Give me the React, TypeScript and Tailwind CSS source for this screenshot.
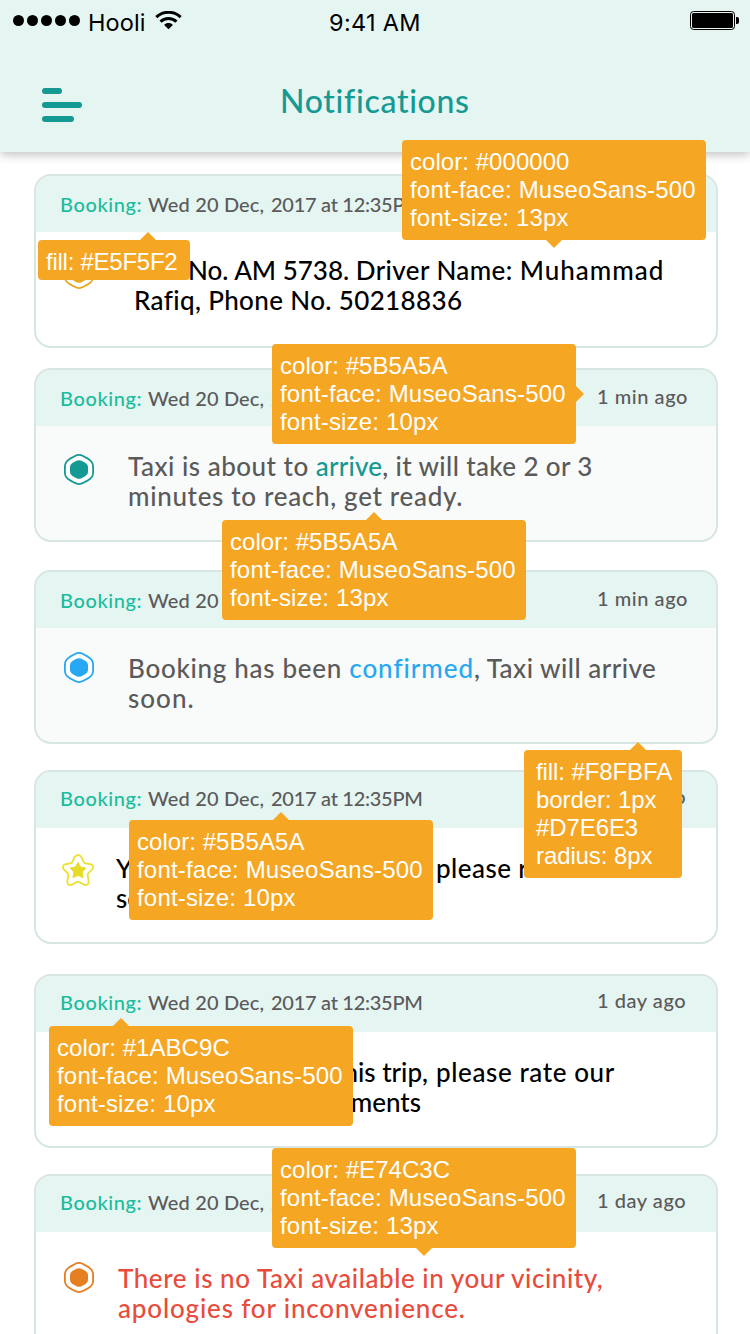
import type { ReactNode } from "react";

function Seg({ ls, className = "", children }: { ls: string; className?: string; children: ReactNode }) {
  return <span className={`${ls} ${className}`}>{children}</span>;
}

function WifiIcon() {
  return (
    <svg className="h-[19px] w-[27px]" viewBox="0 0 27 19" fill="none" stroke="#000">
      <path d="M1.300 6.200C8 -0.300 19 -0.300 25.700 6.200" strokeWidth="3" />
      <path d="M5.500 10.600C9.900 6.400 17.100 6.400 21.500 10.600" strokeWidth="2.900" />
      <path d="M13.500 18.200L9.100 13.900C11.500 11.300 15.500 11.300 17.900 13.900Z" fill="#000" stroke="none" />
    </svg>
  );
}

function Battery() {
  return (
    <div className="flex items-center gap-px">
      <div className="h-[19px] w-[45px] rounded-[3.5px] border border-black p-px">
        <div className="h-full w-full rounded-[1.5px] bg-black" />
      </div>
      <div className="h-[7px] w-[3px] rounded-r-[2px] bg-black" />
    </div>
  );
}

function HexIcon({ color }: { color: string }) {
  return (
    <svg className="h-[31px] w-[30px]" viewBox="0 0 30 31">
      <path
        d="M10.600 2.200Q15 -0.300 19.400 2.200L24.300 4.900Q29.100 7.800 29.100 12.600V18.400Q29.100 23.200 24.300 26.100L19.400 28.800Q15 31.300 10.600 28.800L5.700 26.100Q0.900 23.200 0.900 18.400V12.600Q0.900 7.800 5.700 4.900Z"
        fill="#fff"
        stroke={color}
        strokeWidth="1.800"
      />
      <path
        d="M12.500 6.800Q15 5.500 17.500 6.800L21.600 9.100Q24 10.500 24 13V18Q24 20.500 21.600 21.900L17.500 24.200Q15 25.500 12.500 24.200L8.400 21.900Q6 20.500 6 18V13Q6 10.500 8.400 9.100Z"
        fill={color}
      />
    </svg>
  );
}

function StarIcon() {
  return (
    <svg className="h-[32px] w-[32px]" viewBox="0 0 32 32">
      <path
        d="M12.800 2.800Q16 -1 19.200 2.800L21.800 8.200Q22.400 9.200 23.600 9.400L28.600 10.200Q33 12 30 15.600L26.200 19.400Q25.500 20.200 25.700 21.400L26.700 27.200Q26.500 31.800 22.400 30.800L17.400 28.200Q16 27.500 14.600 28.200L9.600 30.800Q5.500 31.800 5.300 27.200L6.300 21.400Q6.500 20.200 5.800 19.400L2 15.600Q-1 12 3.400 10.200L8.400 9.400Q9.600 9.200 10.200 8.200Z"
        fill="#fff"
        stroke="#EAE238"
        strokeWidth="1.900"
        strokeLinejoin="round"
      />
      <path
        d="M16 8.200L18.600 13L24 14L20.300 18L21.100 23.800L16 21.500L10.900 23.800L11.700 18L8 14L13.400 13Z"
        fill="#E6DC28"
        stroke="#E6DC28"
        strokeWidth="0.800"
        strokeLinejoin="round"
      />
    </svg>
  );
}

type CardProps = {
  icon: ReactNode;
  iconPad: string;
  time: string;
  headPad?: string;
  tone?: string;
  indent: string;
  top: string;
  children: ReactNode;
};

function Card({
  icon,
  iconPad,
  time,
  headPad = "pt-[14px]",
  tone = "bg-white text-black",
  indent,
  top,
  children,
}: CardProps) {
  return (
    <article className={`h-[174px] shrink-0 overflow-hidden rounded-[17px] border-2 border-[#D7E6E3] ${tone}`}>
      <header
        className={`flex h-[56px] justify-between bg-[#E5F5F2] pl-[24px] text-[20px] leading-[24px] font-medium text-[#5B5A5A] ${headPad}`}
      >
        <div className="flex whitespace-pre">
          <span className="w-[88px] tracking-[0.600px] text-[#1ABC9C]">Booking:</span>
          <span className="w-[123px] tracking-[0.160px]">Wed 20 Dec, </span>
          <span className="tracking-[-0.280px]">2017 at 12:35PM</span>
        </div>
        <time className="-mt-[2px] w-[119px] tracking-[0.550px]">{time}</time>
      </header>
      <div className="flex">
        <div className={`shrink-0 ${indent} ${iconPad}`}>{icon}</div>
        <div className={`text-[26px] leading-[30px] font-medium whitespace-pre ${top}`}>{children}</div>
      </div>
    </article>
  );
}

const arrows = {
  up: "-top-[8px] h-[8px] w-[16px] -translate-x-1/2 [clip-path:polygon(50%_0,100%_100%,0_100%)]",
  down: "-bottom-[8px] h-[8px] w-[16px] -translate-x-1/2 [clip-path:polygon(0_0,100%_0,50%_100%)]",
  right: "-right-[8px] h-[16px] w-[8px] -translate-y-1/2 [clip-path:polygon(0_0,100%_50%,0_100%)]",
};

function Note({
  box,
  arrow,
  at,
  lines,
  ls = "",
}: {
  box: string;
  arrow: keyof typeof arrows;
  at: string;
  lines: string[];
  ls?: string;
}) {
  return (
    <aside
      className={`absolute rounded-[4px] bg-[#F5A623] pt-[8px] font-['Liberation_Sans',sans-serif] text-[24px] leading-[28px] whitespace-pre text-white ${box}`}
    >
      <span className={`absolute bg-[#F5A623] ${arrows[arrow]} ${at}`} />
      {lines.map((line) => (
        <div
          key={line}
          className={ls || (line.startsWith("color") ? "tracking-[0.050px]" : "tracking-[0.180px]")}
        >
          {line}
        </div>
      ))}
    </aside>
  );
}

const spec = (color: string, size: string) => [`color: ${color}`, "font-face: MuseoSans-500", `font-size: ${size}`];

export default function App() {
  return (
    <div className="relative h-[1334px] w-[750px] overflow-hidden bg-white font-['Lato',sans-serif]">
      <header className="relative h-[152px] bg-[#E5F5F2] shadow-[0_2px_10px_rgba(0,0,0,0.280)]">
        <div className="grid h-[42px] grid-cols-3 font-['Inter',sans-serif] text-[23.500px] leading-[28px] text-black">
          <div className="flex pl-[13px]">
            <div className="flex gap-[3px] pt-[15px]">
              {[0, 1, 2, 3, 4].map((i) => (
                <span key={i} className="h-[11px] w-[11px] rounded-full bg-black" />
              ))}
            </div>
            <span className="w-[67px] pt-[9px] pl-[8px] tracking-[0.100px]">Hooli</span>
            <span className="pt-[11px] pl-[8px]">
              <WifiIcon />
            </span>
          </div>
          <span className="pt-[9px] text-center tracking-[0.300px]">9:41 AM</span>
          <div className="flex justify-end pt-[11px] pr-[11px]">
            <div>
              <Battery />
            </div>
          </div>
        </div>
        <div className="grid grid-cols-3 pt-[38px] pl-[42px]">
          <div className="-mr-[42px] flex flex-col gap-[8px] pt-[8px]">
            <span className="h-[6px] w-[20px] rounded-full bg-[#149993]" />
            <span className="h-[6px] w-[40px] rounded-full bg-[#149993]" />
            <span className="h-[6px] w-[32px] rounded-full bg-[#149993]" />
          </div>
          <h1 className="w-[220px] pl-[2px] text-[32px] leading-[42px] font-medium tracking-[0.680px] text-[#149993]">
            Notifications
          </h1>
        </div>
      </header>

      <main className="flex w-[752px] flex-col px-[34px] pt-[22px]">
        <Card icon={<HexIcon color="#E8A91F" />} iconPad="pt-[26px] pl-[28px]" time="1 min ago" headPad="pt-[16px]" indent="w-[98px]" top="pt-[23px]">
          <div>
            <Seg ls="tracking-[0.500px]">Taxi </Seg>
            <Seg ls="tracking-[0.010px]">No. AM 5738. </Seg>
            <Seg ls="tracking-[0.400px]">Driver Name: </Seg>
            <Seg ls="tracking-[1.000px]">Muhammad</Seg>
          </div>
          <div>
            <Seg ls="tracking-[0.370px]">Rafiq, Phone No. 50218836</Seg>
          </div>
        </Card>
        <div className="h-[20px] shrink-0" />
        <Card icon={<HexIcon color="#149993" />} iconPad="pt-[28px] pl-[28px]" time="1 min ago" headPad="pt-[16px]" tone="bg-[#F8FBFA] text-[#5B5A5A]" indent="w-[92px]" top="pt-[25px]">
          <div>
            <Seg ls="tracking-[0.500px]">Taxi is about to </Seg>
            <Seg ls="tracking-[0.200px]" className="text-[#149993]">arrive</Seg>
            <Seg ls="tracking-[0.380px]">, it will take 2 or 3</Seg>
          </div>
          <div>
            <Seg ls="tracking-[0.680px]">minutes to reach, get ready.</Seg>
          </div>
        </Card>
        <div className="h-[28px] shrink-0" />
        <Card icon={<HexIcon color="#27A8F3" />} iconPad="pt-[24px] pl-[28px]" time="1 min ago" headPad="pt-[16px]" tone="bg-[#F8FBFA] text-[#5B5A5A]" indent="w-[92px]" top="pt-[25px]">
          <div>
            <Seg ls="tracking-[0.700px]">Booking has been </Seg>
            <Seg ls="tracking-[0.940px]" className="text-[#27A8F3]">confirmed</Seg>
            <Seg ls="tracking-[0.480px]">, Taxi will arrive</Seg>
          </div>
          <div>
            <Seg ls="tracking-[1.000px]">soon.</Seg>
          </div>
        </Card>
        <div className="h-[26px] shrink-0" />
        <Card icon={<StarIcon />} iconPad="pt-[26px] pl-[26px]" time="1 day ago" indent="w-[80px]" top="pt-[25px]">
          <div className="flex">
            <span className="w-[320px]">You have finished this trip,</span>
            <Seg ls="tracking-[0.450px]">please rate us</Seg>
          </div>
          <div>service</div>
        </Card>
        <div className="h-[30px] shrink-0" />
        <Card icon={<StarIcon />} iconPad="pt-[26px] pl-[26px]" time="1 day ago" indent="w-[80px]" top="pt-[25px]">
          <div className="flex">
            <span className="w-[312px] text-right">You have finished this trip,</span>
            <Seg ls="tracking-[0.600px]" className="pl-[8px]">please rate our</Seg>
          </div>
          <div className="w-[305px] text-right">service and add comments</div>
        </Card>
        <div className="h-[26px] shrink-0" />
        <Card icon={<HexIcon color="#E67E22" />} iconPad="pt-[30px] pl-[28px]" time="1 day ago" indent="w-[82px]" top="pt-[31px]" tone="bg-white text-[#E74C3C]">
          <div>
            <Seg ls="tracking-[0.560px]">There is no Taxi available in your vicinity,</Seg>
          </div>
          <div>
            <Seg ls="tracking-[0.840px]">apologies for inconvenience.</Seg>
          </div>
        </Card>
      </main>

      <Note box="top-[140px] left-[402px] h-[100px] w-[304px] pl-[8px]" arrow="down" at="left-[152px]" lines={spec("#000000", "13px")} />
      <Note box="top-[240px] left-[38px] h-[40px] w-[152px] pl-[8px]" arrow="up" at="left-[110px]" lines={["fill: #E5F5F2"]} ls="tracking-[-0.250px]" />
      <Note box="top-[344px] left-[272px] h-[100px] w-[304px] pl-[8px]" arrow="right" at="top-[50px]" lines={spec("#5B5A5A", "10px")} />
      <Note box="top-[520px] left-[222px] h-[100px] w-[304px] pl-[8px]" arrow="up" at="left-[152px]" lines={spec("#5B5A5A", "13px")} />
      <Note box="top-[750px] left-[524px] h-[128px] w-[158px] pl-[12px]" arrow="up" at="left-[114px]" lines={["fill: #F8FBFA", "border: 1px", "#D7E6E3", "radius: 8px"]} ls="tracking-[-0.100px]" />
      <Note box="top-[820px] left-[129px] h-[100px] w-[304px] pl-[8px]" arrow="up" at="left-[152px]" lines={spec("#5B5A5A", "10px")} />
      <Note box="top-[1026px] left-[49px] h-[100px] w-[304px] pl-[8px]" arrow="up" at="left-[72px]" lines={spec("#1ABC9C", "10px")} />
      <Note box="top-[1148px] left-[272px] h-[100px] w-[304px] pl-[8px]" arrow="down" at="left-[152px]" lines={spec("#E74C3C", "13px")} />
    </div>
  );
}
